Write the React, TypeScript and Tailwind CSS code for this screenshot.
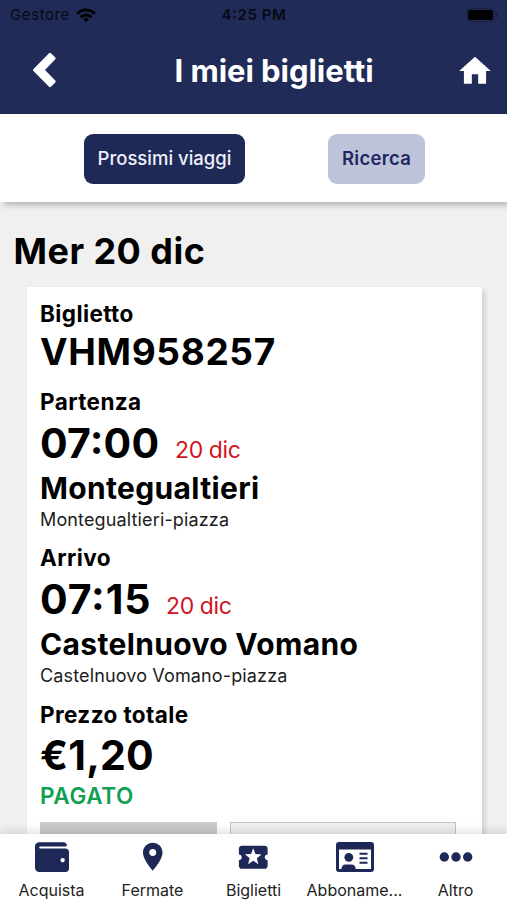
import type { ReactNode } from "react";
import { FaWallet } from "react-icons/fa";
import { MdHome, MdLocalActivity, MdLocationOn } from "react-icons/md";

function StatusBar() {
  return (
    <div className="flex h-[30px] items-center justify-between pr-[9px] pl-[10px] text-[15px] text-black/80">
      <div className="flex w-[160px] items-center gap-[6px]">
        <span className="tracking-[0.6px]">Gestore</span>
        <svg width="20" height="15" viewBox="0 0 20 15" fill="none" stroke="black" strokeWidth="3">
          <path d="M1 5.8C6 .6 14 .6 19 5.8" />
          <path d="M4.5 9.3C7.500 6.3 12.500 6.3 15.500 9.3" />
          <path d="M7 11.300C8.500 9.700 11.500 9.700 13 11.300L10 14.300Z" fill="black" stroke="none" />
        </svg>
      </div>
      <span className="font-semibold tracking-[0.6px] [font-feature-settings:'case']">4:25 PM</span>
      <div className="flex w-[160px] items-center justify-end gap-px">
        <div className="flex h-[14px] w-[29px] items-center rounded-[4px] border border-black/25 px-px">
          <div className="h-[10px] w-full rounded-[2px] bg-black" />
        </div>
        <div className="h-[5px] w-[2px] rounded-r bg-black/25" />
      </div>
    </div>
  );
}

function IdCardIcon() {
  return (
    <svg width="38" height="30" viewBox="0 0 38 30" fill="currentColor">
      <path
        fillRule="evenodd"
        d="M3 0H35A3 3 0 0 1 38 3V27A3 3 0 0 1 35 30H3A3 3 0 0 1 0 27V3A3 3 0 0 1 3 0ZM3 7.500V27H5.500C5.500 24.300 7 22.500 9.500 22.500H15.500C18 22.500 19.700 24.300 19.700 27H35V7.500Z"
      />
      <circle cx="12.800" cy="15.300" r="4.400" />
      <path d="M23.500 10.700H31.500V12.700H23.500ZM23.500 15.200H31.500V17.200H23.500ZM23.500 19.700H31.500V21.700H23.500Z" />
    </svg>
  );
}

function Stop({ label, time, place, stop, timeClass }: {
  label: string;
  time: string;
  place: string;
  stop: string;
  timeClass: string;
}) {
  return (
    <div>
      <Label>{label}</Label>
      <div className="flex h-8 items-baseline text-[41px] leading-8 font-bold">
        <span className={timeClass}>{time}</span>
        <span className="text-[23px] leading-8 font-normal tracking-[-0.4px] text-[#d0141f]">20 dic</span>
      </div>
      <div className="mt-[13px] text-[30px] leading-8 font-bold tracking-[0.34px]">{place}</div>
      <div className="pt-[2px] text-[18px] leading-[27px] tracking-[0.14px] text-[#1c1c1c]">{stop}</div>
    </div>
  );
}

function Label({ children }: { children: ReactNode }) {
  return <div className="text-[22.5px] leading-[50px] font-bold tracking-[0.4px]">{children}</div>;
}

function NavItem({ label, children }: { label: string; children: ReactNode }) {
  return (
    <div className="flex w-[101px] flex-col items-center text-[#1d2856]">
      <div className="flex h-[46px] items-center">{children}</div>
      <span className="text-[16px] leading-5 text-[#222]">{label}</span>
    </div>
  );
}

export default function App() {
  return (
    <div className="flex h-[900px] w-[507px] flex-col overflow-hidden bg-[#f0f0f0] font-['Inter','Liberation_Sans',sans-serif] whitespace-nowrap text-black">
      <header className="h-[114px] shrink-0 bg-[#202b57]">
        <StatusBar />
        <div className="flex h-[82px] items-center justify-between pr-[13px] pl-[33px] text-white">
          <svg width="23" height="36" viewBox="0 0 23 36" fill="white" className="mb-[2px]">
            <path d="M0.500 17 16 1.200Q17 .3 18 1.200L22.300 5.500Q23 6.300 22.300 7.300L12 18 22.300 28.500Q23 29.400 22.300 30.400L18 34.800Q17 35.700 16 34.800L0.500 19Q-.3 18 .5 17Z" />
          </svg>
          <h1 className="pl-[36px] text-[31px] font-bold tracking-[-0.04px]">I miei biglietti</h1>
          <MdHome size={38} />
        </div>
      </header>
      <div className="flex h-[88px] shrink-0 items-center gap-[83px] bg-white pt-px pl-[84px] text-[18.500px] shadow-[4px_3px_6px_rgba(0,0,0,0.25)]">
        <button className="h-[50px] w-[161px] rounded-[9px] bg-[#1e2955] font-medium text-[#eef1fb]">Prossimi viaggi</button>
        <button className="h-[50px] w-[97px] rounded-[9px] bg-[#bfc3da] font-semibold tracking-[0.3px] text-[#1e2763]">Ricerca</button>
      </div>
      <main className="min-h-0 flex-1 overflow-hidden">
        <h2 className="mt-[24px] pl-[13.500px] text-[36px] leading-[50px] font-bold tracking-[0.45px]">Mer 20 dic</h2>
        <section className="mt-[11px] ml-[27px] h-[600px] w-[454.500px] bg-white pt-[2px] pl-[13px] shadow-[3px_3px_5px_rgba(0,0,0,0.13)]">
          <Label>Biglietto</Label>
          <div className="-mt-[12px] mb-px text-[37px] leading-[49px] font-bold tracking-[0.65px]">VHM958257</div>
          <Stop label="Partenza" time="07:00" place="Montegualtieri" stop="Montegualtieri-piazza" timeClass="w-[135px] tracking-[0.2px] [font-feature-settings:'case']" />
          <Stop label="Arrivo" time="07:15" place="Castelnuovo Vomano" stop="Castelnuovo Vomano-piazza" timeClass="w-[126px] tracking-[0.9px] [font-feature-settings:'case']" />
          <div className="pt-px">
            <Label>Prezzo totale</Label>
          </div>
          <div className="text-[41px] leading-[31px] font-bold tracking-[0.2px]">€1,20</div>
          <div className="text-[22.5px] leading-[50px] font-semibold tracking-[0.6px] text-[#10a054]">PAGATO</div>
          <div className="mt-px flex gap-[13px]">
            <div className="h-12 w-[177px] bg-[#cbcbcb]" />
            <div className="h-12 w-[226px] border border-[#c4c4c4] bg-[#efefef]" />
          </div>
        </section>
      </main>
      <nav className="flex h-[66px] shrink-0 justify-center bg-white shadow-[0_-2px_10px_rgba(0,0,0,0.15)]">
        <NavItem label="Acquista"><FaWallet size={34} /></NavItem>
        <NavItem label="Fermate"><MdLocationOn size={33.5} /></NavItem>
        <NavItem label="Biglietti"><MdLocalActivity size={34.5} /></NavItem>
        <NavItem label="Abboname..."><IdCardIcon /></NavItem>
        <NavItem label="Altro">
          <svg width="34" height="10" viewBox="0 0 34 10" fill="currentColor">
            <circle cx="5.3" cy="5" r="4.700" />
            <circle cx="17" cy="5" r="4.700" />
            <circle cx="28.700" cy="5" r="4.700" />
          </svg>
        </NavItem>
      </nav>
    </div>
  );
}
